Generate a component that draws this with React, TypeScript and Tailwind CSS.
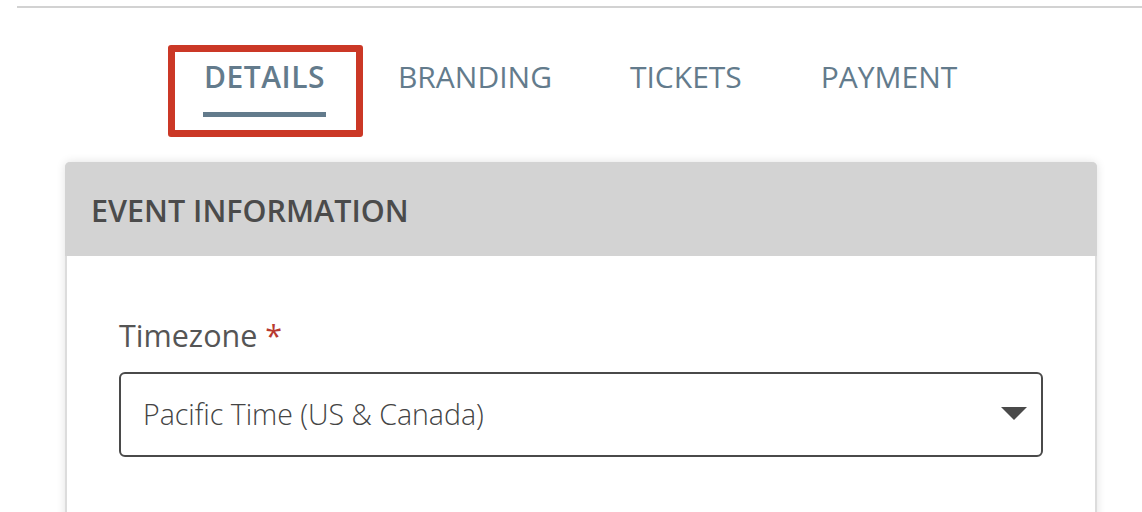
import React from "react";

const tabs = [
  { t: "DETAILS", ml: "ml-0" },
  { t: "BRANDING", ml: "ml-[73px]" },
  { t: "TICKETS", ml: "ml-[78px]" },
  { t: "PAYMENT", ml: "ml-[79px]" },
];

export default function App() {
  return (
    <div className="w-[1142px] h-[512px] overflow-hidden bg-white font-['Open_Sans','Liberation_Sans',sans-serif]">
      <div className="ml-[17px] mt-[6px] h-[2px] bg-[#d2d2d2]" />
      <div className="ml-[65px] w-[1032px]">
        <div className="flex justify-start pl-[139px] pt-[54px]">
          {tabs.map(({ t, ml }, i) => (
            <div key={t} className={"relative flex flex-col items-center " + ml}>
              <span
                className={
                  "text-[30px] leading-[30px] text-[#637b8c] " +
                  (i === 0 ? "font-semibold tracking-[0.5px]" : "font-normal")
                }
              >
                {t}
              </span>
              <div
                className={
                  "mt-[20px] h-[5px] w-[calc(100%+2px)] " +
                  (i === 0 ? "bg-[#637b8c]" : "bg-transparent")
                }
              />
              {i === 0 && (
                <div className="absolute left-[-36px] top-[-17px] w-[195px] h-[92px] border-[7px] border-[#cb3826] rounded-[3px]" />
              )}
            </div>
          ))}
        </div>
        <div className="mt-[45px] rounded-t-[5px] border-x-2 border-[#dcdcdc] shadow-[0_0_10px_rgba(0,0,0,0.12)] h-[400px] bg-white">
          <div className="-mx-[2px] h-[94px] rounded-t-[5px] bg-[#d3d3d3] flex items-center pl-[26px]">
            <span className="text-[30.5px] font-semibold text-[#4b4b4b] leading-none mt-[2px]">
              EVENT INFORMATION
            </span>
          </div>
          <div className="pl-[52px] pr-[52px] pt-[64px]">
            <div className="text-[30.5px] leading-none text-[#555555]">
              Timezone <span className="text-[#b83a30]">*</span>
            </div>
            <div className="mt-[21px] h-[85px] border-2 border-[#4a4a4a] rounded-[6px] flex items-center justify-between pl-[22px] pr-[14px]">
              <span className="text-[28.5px] font-light text-[#444444] leading-none">
                Pacific Time (US &amp; Canada)
              </span>
              <svg width="26" height="14" viewBox="0 0 26 14">
                <polygon points="0,0 26,0 13,13" fill="#4a4a4a" />
              </svg>
            </div>
          </div>
        </div>
      </div>
    </div>
  );
}
